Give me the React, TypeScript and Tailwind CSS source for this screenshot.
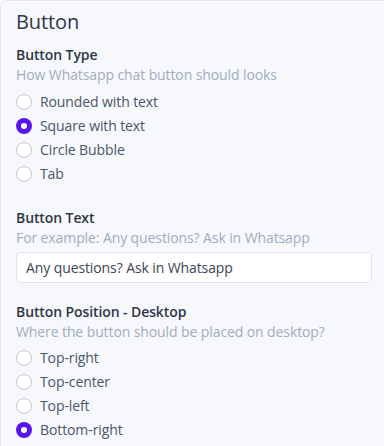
import { useState } from 'react'

const Radio = ({ label, checked, onClick }: { label: string; checked: boolean; onClick: () => void }) => (
  <label className="flex h-6 cursor-pointer items-center gap-2" onClick={onClick}>
    {checked ? (
      <span className="flex h-4 w-4 items-center justify-center rounded-full bg-[#5a14f0]">
        <span className="h-1.5 w-1.5 rounded-full bg-white" />
      </span>
    ) : (
      <span className="h-4 w-4 rounded-full border border-[#c3c7cf] bg-white" />
    )}
    <span className="text-sm text-[#4a5568]">{label}</span>
  </label>
)

const Field = ({ title, hint, children, className = '' }) => (
  <div className={className}>
    <div className="text-sm leading-5 font-semibold text-[#2d3748]">{title}</div>
    <div className="text-sm leading-5 text-[#a0aec0]">{hint}</div>
    {children}
  </div>
)

export default function App() {
  const [type, setType] = useState('Square with text')
  const [pos, setPos] = useState('Bottom-right')

  return (
    <div className="h-[446px] w-[384px] overflow-hidden font-['Open_Sans',sans-serif] tracking-[-0.1px]">
      <div className="h-full rounded-tl-md border-t border-l border-[#e3e6ec] bg-[#f7f8fc] pt-[7px] pl-[15px]">
        <h2 className="text-[20px] leading-7 text-[#2d3748]">Button</h2>

        <Field title="Button Type" hint="How Whatsapp chat button should looks" className="mt-[9px]">
          <div className="mt-[5px]">
            {['Rounded with text', 'Square with text', 'Circle Bubble', 'Tab'].map((o) => (
              <Radio key={o} label={o} checked={type === o} onClick={() => setType(o)} />
            ))}
          </div>
        </Field>

        <Field title="Button Text" hint="For example: Any questions? Ask in Whatsapp" className="mt-[22px]">
          <input
            defaultValue="Any questions? Ask in Whatsapp"
            className="mt-[4px] h-[31px] w-[356px] rounded border border-[#e1e4ea] bg-white px-[9px] text-sm text-[#3d4556] outline-none"
          />
        </Field>

        <Field title="Button Position - Desktop" hint="Where the button should be placed on desktop?" className="mt-[19px]">
          <div className="mt-[4px]">
            {['Top-right', 'Top-center', 'Top-left', 'Bottom-right'].map((o) => (
              <Radio key={o} label={o} checked={pos === o} onClick={() => setPos(o)} />
            ))}
          </div>
        </Field>
      </div>
    </div>
  )
}
